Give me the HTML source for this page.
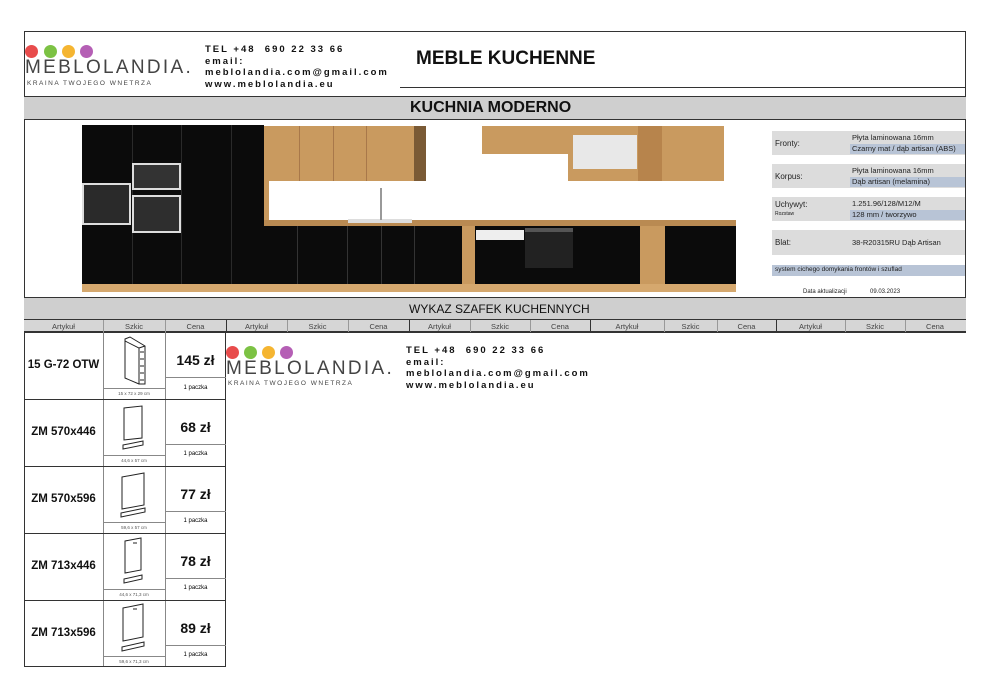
<!DOCTYPE html>
<html><head><meta charset="utf-8"><style>
*{margin:0;padding:0;box-sizing:border-box}
body{width:990px;height:700px;background:#fff;position:relative;font-family:"Liberation Sans",sans-serif;overflow:hidden}
.a{position:absolute}
.dot{position:absolute;width:13px;height:13px;border-radius:50%}
.logo .t{position:absolute;font-size:19px;letter-spacing:2.3px;color:#444}
.logo .s{position:absolute;font-size:6.5px;letter-spacing:1.5px;color:#444}
.ct{position:absolute;font-size:9.5px;font-weight:bold;letter-spacing:2px;line-height:11.5px;color:#111}
.hl{position:absolute;height:1px;background:#333}
.vl{position:absolute;width:1px;background:#333}
.gb{position:absolute;background:#cfcfcf}
.lbl{position:absolute;font-size:7.5px;color:#444;text-align:center}
.art{position:absolute;font-size:11.5px;font-weight:bold;text-align:center;width:79px;color:#111}
.pr{position:absolute;font-size:14px;font-weight:bold;text-align:center;width:61px;color:#111}
.pk{position:absolute;font-size:6px;text-align:center;width:61px}
.dim{position:absolute;font-size:4.5px;text-align:center;width:62px;color:#555}
.blk{position:absolute;background:#0b0b0b}
.oak{position:absolute;background:#c99a5f}
.sp{position:absolute;font-size:8px;color:#222}
.ln{position:absolute;width:1px;background:#333}
.hd{position:absolute;height:1px;width:10px;background:#888}
</style></head><body>

<div class="hl" style="left:24px;top:31px;width:942px"></div>
<div class="vl" style="left:965px;top:31px;height:302px"></div>
<div class="vl" style="left:24px;top:31px;height:302px"></div>
<div class="hl" style="left:400px;top:87px;width:566px"></div>
<div class="hl" style="left:24px;top:96px;width:942px"></div>

<div class="logo">
<div class="dot" style="left:25px;top:45px;background:#e84c4c"></div>
<div class="dot" style="left:44px;top:45px;background:#7cc244"></div>
<div class="dot" style="left:62px;top:45px;background:#f5b531"></div>
<div class="dot" style="left:80px;top:45px;background:#b55fb5"></div>
<div class="t" style="left:25px;top:57px">MEBLOLANDIA.</div>
<div class="s" style="left:27px;top:80px">KRAINA TWOJEGO WNETRZA</div>
</div>
<div class="ct" style="left:205px;top:44px">TEL +48&nbsp; 690 22 33 66<br>email:<br>meblolandia.com@gmail.com<br>www.meblolandia.eu</div>
<div class="a" style="left:416px;top:48px;font-size:19px;font-weight:bold;color:#111">MEBLE KUCHENNE</div>

<div class="gb" style="left:24px;top:97px;width:942px;height:23px;border-bottom:1px solid #333"></div>
<div class="a" style="left:410px;top:99px;font-size:16px;font-weight:bold;color:#111">KUCHNIA MODERNO</div>

<!-- kitchen image -->
<div class="blk" style="left:82px;top:125px;width:182px;height:160px"></div>
<div class="ln" style="left:132px;top:125px;height:160px;background:#2a2a2a"></div>
<div class="ln" style="left:181px;top:125px;height:160px;background:#2a2a2a"></div>
<div class="ln" style="left:231px;top:125px;height:160px;background:#2a2a2a"></div>
<div class="a" style="left:82px;top:183px;width:49px;height:42px;background:#2a2a2a;border:2px solid #ddd"></div>
<div class="a" style="left:132px;top:163px;width:49px;height:27px;background:#333;border:2px solid #ddd"></div>
<div class="a" style="left:132px;top:195px;width:49px;height:38px;background:#2e2e2e;border:2px solid #ddd"></div>
<div class="oak" style="left:264px;top:126px;width:162px;height:55px"></div>
<div class="ln" style="left:299px;top:126px;height:55px;background:#a8784a"></div>
<div class="ln" style="left:333px;top:126px;height:55px;background:#a8784a"></div>
<div class="ln" style="left:366px;top:126px;height:55px;background:#a8784a"></div>
<div class="a" style="left:414px;top:126px;width:12px;height:55px;background:#7a5a35"></div>
<div class="oak" style="left:264px;top:181px;width:5px;height:40px"></div>
<div class="oak" style="left:264px;top:220px;width:472px;height:6px;background:#b98a52"></div>
<div class="a" style="left:348px;top:219px;width:64px;height:4px;background:#ddd"></div>
<div class="a" style="left:380px;top:188px;width:2px;height:32px;background:#999"></div>
<div class="blk" style="left:264px;top:226px;width:198px;height:58px"></div>
<div class="ln" style="left:297px;top:226px;height:58px;background:#333"></div>
<div class="ln" style="left:347px;top:226px;height:58px;background:#333"></div>
<div class="ln" style="left:381px;top:226px;height:58px;background:#333"></div>
<div class="ln" style="left:414px;top:226px;height:58px;background:#333"></div>
<div class="oak" style="left:462px;top:226px;width:13px;height:58px"></div>
<div class="blk" style="left:475px;top:226px;width:165px;height:58px"></div>
<div class="a" style="left:476px;top:230px;width:48px;height:10px;background:#eee"></div>
<div class="a" style="left:525px;top:228px;width:48px;height:40px;background:#222;border-top:4px solid #555"></div>
<div class="oak" style="left:640px;top:226px;width:25px;height:58px"></div>
<div class="blk" style="left:665px;top:226px;width:71px;height:58px"></div>
<div class="oak" style="left:82px;top:284px;width:654px;height:8px;background:#d5a86e"></div>
<div class="oak" style="left:482px;top:126px;width:86px;height:28px"></div>
<div class="oak" style="left:568px;top:126px;width:156px;height:55px"></div>
<div class="a" style="left:638px;top:126px;width:24px;height:55px;background:#b7844c"></div>
<div class="a" style="left:573px;top:135px;width:64px;height:34px;background:#e8e8e8"></div>

<!-- specs -->
<div class="gb" style="left:772px;top:131px;width:193px;height:24px;background:#dcdcdc"></div>
<div class="a" style="left:850px;top:144px;width:115px;height:10px;background:#b8c4d6"></div>
<div class="sp" style="left:775px;top:139px">Fronty:</div>
<div class="sp" style="left:852px;top:133px;font-size:7.5px">Płyta laminowana 16mm</div>
<div class="sp" style="left:852px;top:144px;font-size:7.5px">Czarny mat / dąb artisan (ABS)</div>
<div class="gb" style="left:772px;top:164px;width:193px;height:24px;background:#dcdcdc"></div>
<div class="a" style="left:850px;top:177px;width:115px;height:10px;background:#b8c4d6"></div>
<div class="sp" style="left:775px;top:172px">Korpus:</div>
<div class="sp" style="left:852px;top:166px;font-size:7.5px">Płyta laminowana 16mm</div>
<div class="sp" style="left:852px;top:177px;font-size:7.5px">Dąb artisan (melamina)</div>
<div class="gb" style="left:772px;top:197px;width:193px;height:24px;background:#dcdcdc"></div>
<div class="a" style="left:850px;top:210px;width:115px;height:10px;background:#b8c4d6"></div>
<div class="sp" style="left:775px;top:200px">Uchywyt:</div>
<div class="sp" style="left:775px;top:211px;font-size:5px">Rozstaw</div>
<div class="sp" style="left:852px;top:199px;font-size:7.5px">1.251.96/128/M12/M</div>
<div class="sp" style="left:852px;top:210px;font-size:7.5px">128 mm / tworzywo</div>
<div class="gb" style="left:772px;top:230px;width:193px;height:25px;background:#dcdcdc"></div>
<div class="sp" style="left:775px;top:238px">Blat:</div>
<div class="sp" style="left:852px;top:238px;font-size:7.5px">38-R20315RU Dąb Artisan</div>
<div class="a" style="left:772px;top:265px;width:193px;height:11px;background:#b8c4d6"></div>
<div class="sp" style="left:775px;top:266px;font-size:6.5px">system cichego domykania frontów i szuflad</div>
<div class="sp" style="left:803px;top:289px;font-size:6px">Data aktualizacji</div>
<div class="sp" style="left:870px;top:289px;font-size:6px">09.03.2023</div>

<div class="gb" style="left:24px;top:297px;width:942px;height:23px;border-top:1px solid #333;border-bottom:1px solid #333"></div>
<div class="a" style="left:409px;top:302px;font-size:12px;color:#111">WYKAZ SZAFEK KUCHENNYCH</div>
<div class="gb" style="left:24px;top:320px;width:942px;height:12px;background:#d6d6d6;border-bottom:1px solid #333"></div>
<div class="hl" style="left:24px;top:332px;width:942px"></div>
<div class="lbl" style="left:24px;top:322px;width:79px">Artykuł</div>
<div class="lbl" style="left:103px;top:322px;width:62px">Szkic</div>
<div class="lbl" style="left:165px;top:322px;width:61px">Cena</div>
<div class="lbl" style="left:226px;top:322px;width:61px">Artykuł</div>
<div class="lbl" style="left:287px;top:322px;width:61px">Szkic</div>
<div class="lbl" style="left:348px;top:322px;width:61px">Cena</div>
<div class="lbl" style="left:409px;top:322px;width:61px">Artykuł</div>
<div class="lbl" style="left:470px;top:322px;width:60px">Szkic</div>
<div class="lbl" style="left:530px;top:322px;width:60px">Cena</div>
<div class="lbl" style="left:590px;top:322px;width:74px">Artykuł</div>
<div class="lbl" style="left:664px;top:322px;width:53px">Szkic</div>
<div class="lbl" style="left:717px;top:322px;width:59px">Cena</div>
<div class="lbl" style="left:776px;top:322px;width:69px">Artykuł</div>
<div class="lbl" style="left:845px;top:322px;width:60px">Szkic</div>
<div class="lbl" style="left:905px;top:322px;width:60px">Cena</div>
<div class="vl" style="left:103px;top:320px;height:12px;background:#999"></div>
<div class="vl" style="left:165px;top:320px;height:12px;background:#999"></div>
<div class="vl" style="left:226px;top:320px;height:12px"></div>
<div class="vl" style="left:287px;top:320px;height:12px;background:#999"></div>
<div class="vl" style="left:348px;top:320px;height:12px;background:#999"></div>
<div class="vl" style="left:409px;top:320px;height:12px"></div>
<div class="vl" style="left:470px;top:320px;height:12px;background:#999"></div>
<div class="vl" style="left:530px;top:320px;height:12px;background:#999"></div>
<div class="vl" style="left:590px;top:320px;height:12px"></div>
<div class="vl" style="left:664px;top:320px;height:12px;background:#999"></div>
<div class="vl" style="left:717px;top:320px;height:12px;background:#999"></div>
<div class="vl" style="left:776px;top:320px;height:12px"></div>
<div class="vl" style="left:845px;top:320px;height:12px;background:#999"></div>
<div class="vl" style="left:905px;top:320px;height:12px;background:#999"></div>

<div class="vl" style="left:24px;top:332px;height:335px"></div>
<div class="vl" style="left:225px;top:332px;height:335px"></div>
<div class="vl" style="left:103px;top:332px;height:335px;background:#888"></div>
<div class="vl" style="left:165px;top:332px;height:335px;background:#888"></div>
<div class="hl" style="left:24px;top:399px;width:202px"></div>
<div class="hl" style="left:24px;top:466px;width:202px"></div>
<div class="hl" style="left:24px;top:533px;width:202px"></div>
<div class="hl" style="left:24px;top:600px;width:202px"></div>
<div class="hl" style="left:24px;top:666px;width:202px"></div>

<div class="art" style="left:24px;top:359px">15 G-72 OTW</div>
<div class="pr" style="left:165px;top:352px">145 zł</div>
<div class="hl" style="left:165px;top:377px;width:61px;background:#888"></div>
<div class="pk" style="left:165px;top:385px">1 paczka</div>
<div class="hl" style="left:103px;top:388px;width:62px;background:#888"></div>
<div class="dim" style="left:103px;top:391px">15 x 72 x 29 cm</div>
<svg class="a" style="left:120px;top:336px" width="30" height="50"><path d="M5 3 L10 1 L25 10 L25 48 L19 48 L19 12 L5 5 Z M5 5 L5 42 L19 48 M19 12 L25 10" fill="none" stroke="#222" stroke-width="1"/><path d="M20 16h4M20 23h4M20 30h4M20 37h4M20 44h4" stroke="#222"/></svg>

<div class="art" style="left:24px;top:426px">ZM 570x446</div>
<div class="pr" style="left:165px;top:419px">68 zł</div>
<div class="hl" style="left:165px;top:444px;width:61px;background:#888"></div>
<div class="pk" style="left:165px;top:451px">1 paczka</div>
<div class="hl" style="left:103px;top:455px;width:62px;background:#888"></div>
<div class="dim" style="left:103px;top:458px">44,6 x 57 cm</div>
<svg class="a" style="left:120px;top:404px" width="30" height="48"><path d="M4 4 L22 2 L22 34 L4 36 Z M3 41 L23 37 L23 41 L3 45 Z" fill="none" stroke="#222"/></svg>

<div class="art" style="left:24px;top:493px">ZM 570x596</div>
<div class="pr" style="left:165px;top:486px">77 zł</div>
<div class="hl" style="left:165px;top:511px;width:61px;background:#888"></div>
<div class="pk" style="left:165px;top:518px">1 paczka</div>
<div class="hl" style="left:103px;top:522px;width:62px;background:#888"></div>
<div class="dim" style="left:103px;top:525px">59,6 x 57 cm</div>
<svg class="a" style="left:118px;top:471px" width="32" height="48"><path d="M4 6 L26 2 L26 34 L4 38 Z M3 42 L27 37 L27 41 L3 46 Z" fill="none" stroke="#222"/></svg>

<div class="art" style="left:24px;top:560px">ZM 713x446</div>
<div class="pr" style="left:165px;top:553px">78 zł</div>
<div class="hl" style="left:165px;top:578px;width:61px;background:#888"></div>
<div class="pk" style="left:165px;top:585px">1 paczka</div>
<div class="hl" style="left:103px;top:589px;width:62px;background:#888"></div>
<div class="dim" style="left:103px;top:592px">44,6 x 71,3 cm</div>
<svg class="a" style="left:120px;top:537px" width="30" height="50"><path d="M5 4 L21 1 L21 33 L5 36 Z M13 6 h4 M4 42 L22 38 L22 42 L4 46 Z" fill="none" stroke="#222"/></svg>

<div class="art" style="left:24px;top:627px">ZM 713x596</div>
<div class="pr" style="left:165px;top:620px">89 zł</div>
<div class="hl" style="left:165px;top:645px;width:61px;background:#888"></div>
<div class="pk" style="left:165px;top:652px">1 paczka</div>
<div class="hl" style="left:103px;top:656px;width:62px;background:#888"></div>
<div class="dim" style="left:103px;top:659px">59,6 x 71,3 cm</div>
<svg class="a" style="left:118px;top:603px" width="32" height="50"><path d="M5 5 L25 1 L25 34 L5 38 Z M15 6 h4 M4 44 L26 39 L26 43 L4 48 Z" fill="none" stroke="#222"/></svg>

<div class="logo">
<div class="dot" style="left:226px;top:346px;background:#e84c4c"></div>
<div class="dot" style="left:244px;top:346px;background:#7cc244"></div>
<div class="dot" style="left:262px;top:346px;background:#f5b531"></div>
<div class="dot" style="left:280px;top:346px;background:#b55fb5"></div>
<div class="t" style="left:226px;top:358px">MEBLOLANDIA.</div>
<div class="s" style="left:228px;top:380px">KRAINA TWOJEGO WNETRZA</div>
</div>
<div class="ct" style="left:406px;top:345px">TEL +48&nbsp; 690 22 33 66<br>email:<br>meblolandia.com@gmail.com<br>www.meblolandia.eu</div>
</body></html>
